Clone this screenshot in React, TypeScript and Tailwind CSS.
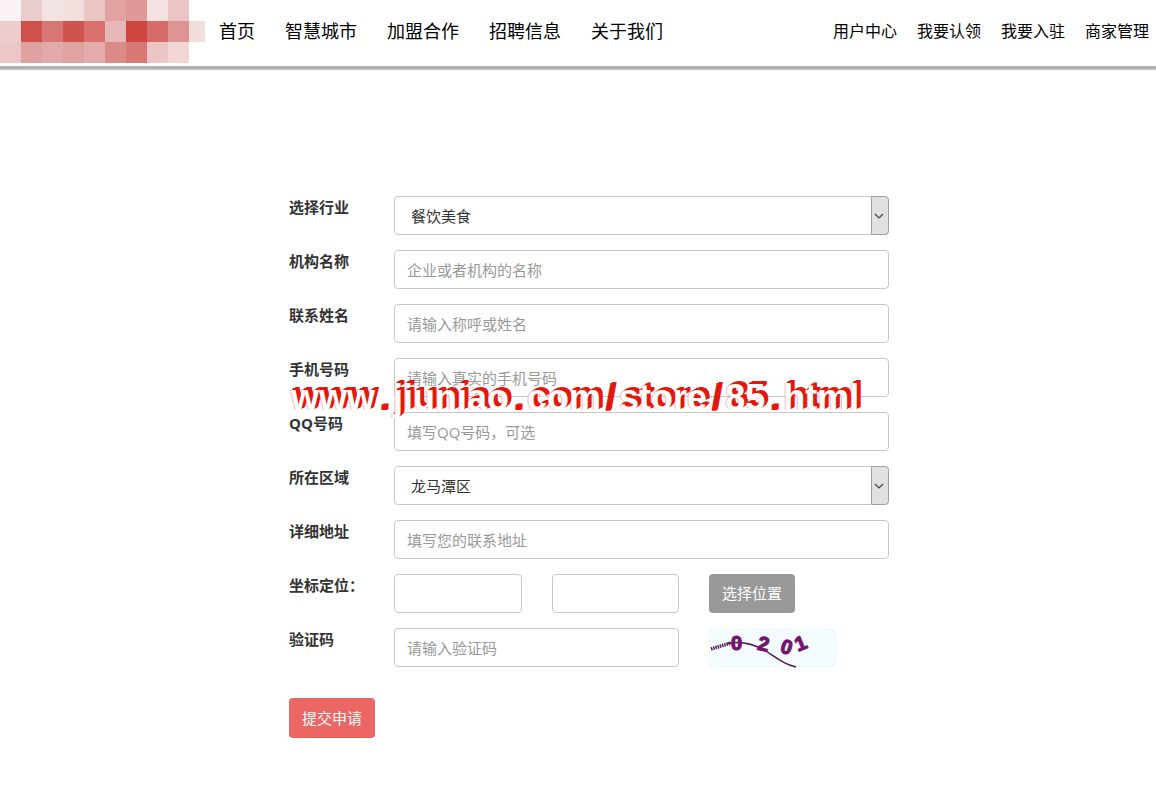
import type { ReactNode } from 'react';

const mainNav = ['首页', '智慧城市', '加盟合作', '招聘信息', '关于我们'];
const userNav = ['用户中心', '我要认领', '我要入驻', '商家管理'];

const LOGO_ROWS = [
    ['#fbf3f3', '#ebcccc', '#f3e2e2', '#f4dfdf', '#ebc5c4', '#e3a3a2', '#df9997', '#f4e2e2', '#e9c6c5'],
    ['#ebcbcb', '#cf514c', '#d87875', '#cd544f', '#da716e', '#e6b8b7', '#cd4740', '#d76d6a', '#de9492', '#f2dddd'],
    ['#ebc8c7', '#dfa2a1', '#e2aaa8', '#dfa3a2', '#e2adab', '#da8a87', '#d87874', '#ebc6c5', '#f1d6d5'],
];

const watermark = ['www', '.', 'jiuniao', '.', 'com', '/', 'store', '/', '85', '.', 'html'];

const inputClass =
    'h-[39px] w-full min-w-0 rounded border border-[#c8c8c8] bg-white px-3 text-[15px] text-[#333] outline-none placeholder:text-[#999] focus:border-[#999]';

function Logo() {
    return (
        <svg className="h-16 w-[205px] shrink-0" viewBox="0 0 205 64" shapeRendering="crispEdges" aria-hidden="true">
            {LOGO_ROWS.map((row, y) =>
                row.map((fill, x) => (
                    <rect key={`${x}-${y}`} x={x * 21} y={y * 21} width={21} height={21} fill={fill} />
                ))
            )}
        </svg>
    );
}

function Row({ id, label, children }: { id: string; label: string; children: ReactNode }) {
    return (
        <div className="flex">
            <label htmlFor={id} className="w-[105px] shrink-0 text-[15px] leading-[22px] font-bold text-[#333]">
                {label}
            </label>
            <div className="min-w-0 flex-1">{children}</div>
        </div>
    );
}

function TextRow({ id, label, placeholder }: { id: string; label: string; placeholder: string }) {
    return (
        <Row id={id} label={label}>
            <input id={id} name={id} type="text" placeholder={placeholder} className={inputClass} />
        </Row>
    );
}

function SelectRow({ id, label, options }: { id: string; label: string; options: string[] }) {
    return (
        <Row id={id} label={label}>
            <div className="relative">
                <select
                    id={id}
                    name={id}
                    className="block h-[39px] w-full appearance-none rounded border border-[#c8c8c8] bg-white px-4 pt-0.5 text-[15px] text-[#333] outline-none"
                >
                    {options.map((option) => (
                        <option key={option}>{option}</option>
                    ))}
                </select>
                <span className="pointer-events-none absolute inset-y-0 right-0 flex w-[18px] items-center justify-center rounded-r border border-[#a0a0a0] bg-[#e1e1e1] pr-0.5">
                    <svg width="10" height="6" viewBox="0 0 10 6" fill="none" stroke="#444" strokeWidth="1.2">
                        <path d="M1 1l4 4 4-4" />
                    </svg>
                </span>
            </div>
        </Row>
    );
}

function Captcha() {
    return (
        <svg className="h-10 w-32" viewBox="0 0 128 40" role="img" aria-label="验证码 0201">
            <rect width="128" height="40" fill="#f3fbff" />
            {/* noise line, hatched where it starts */}
            <path d="M2 21 L22 15" stroke="#5b1b55" strokeWidth="3.5" strokeDasharray="1.5 0.8" fill="none" />
            <path d="M18 15.5 C34 12 48 17 60 25 S76 36 87 39" stroke="#541650" strokeWidth="1.5" fill="none" />
            <g
                fill="#74146c"
                stroke="#74146c"
                strokeWidth="1.2"
                fontFamily="Liberation Sans, sans-serif"
                fontWeight="bold"
                fontSize="20"
            >
                <text x="22" y="22">0</text>
                <text x="49" y="23" transform="rotate(12 55 16)">2</text>
                <text x="72" y="26" transform="rotate(18 78 19)">0</text>
                <text x="86" y="22" transform="rotate(-22 92 15)">1</text>
            </g>
        </svg>
    );
}

function Watermark() {
    return (
        <p className="pointer-events-none absolute top-[184px] left-6 flex gap-1 font-['Liberation_Sans',sans-serif] text-4xl leading-9 font-bold whitespace-nowrap">
            {watermark.map((part, i) => (
                <span
                    key={i}
                    className={
                        part === '.' || part === '/'
                            ? 'text-[#e3170d] [text-shadow:1px_0_0_#e3170d,2px_-1px_0_#e3170d]'
                            : 'text-white [text-shadow:1px_-1px_0_#e3170d,2px_-2px_0_#e3170d,3px_-2px_0_#e3170d,4px_-3px_0_#e3170d,-1px_0_0_#f3b9b6]'
                    }
                >
                    {part}
                </span>
            ))}
        </p>
    );
}

export default function App() {
    return (
        <div className="min-h-screen bg-white font-['Open_Sans','Noto_Sans_CJK_SC',sans-serif]">
            <header className="flex h-[69px] items-start border-b-[3px] border-[#b2b2b2] shadow-[0_1px_1px_#ccc]">
                <Logo />
                <nav className="ml-3.5 flex h-[62px] shrink-0 items-center gap-[30px] text-lg text-black">
                    {mainNav.map((item) => (
                        <a key={item} href="#">{item}</a>
                    ))}
                </nav>
                <nav className="mr-[7px] ml-auto flex h-[62px] shrink-0 items-center gap-5 text-base text-black">
                    {userNav.map((item) => (
                        <a key={item} href="#">{item}</a>
                    ))}
                </nav>
            </header>

            <main className="relative mx-auto mt-[127px] max-w-[622px] pl-[22px]">
                <form onSubmit={(e) => e.preventDefault()}>
                    <div className="flex flex-col gap-[15px]">
                        <SelectRow id="industry" label="选择行业" options={['餐饮美食']} />
                        <TextRow id="company" label="机构名称" placeholder="企业或者机构的名称" />
                        <TextRow id="contact" label="联系姓名" placeholder="请输入称呼或姓名" />
                        <TextRow id="mobile" label="手机号码" placeholder="请输入真实的手机号码" />
                        <TextRow id="qq" label="QQ号码" placeholder="填写QQ号码，可选" />
                        <SelectRow id="area" label="所在区域" options={['龙马潭区']} />
                        <TextRow id="address" label="详细地址" placeholder="填写您的联系地址" />
                        <Row id="lng" label="坐标定位：">
                            <div className="grid grid-cols-[128px_127px_1fr] gap-x-[30px]">
                                <input id="lng" name="lng" type="text" className={inputClass} />
                                <input id="lat" name="lat" type="text" aria-label="纬度" className={inputClass} />
                                <button type="button" className="h-[39px] w-[86px] rounded bg-[#999] text-[15px] text-white">
                                    选择位置
                                </button>
                            </div>
                        </Row>
                        <Row id="captcha" label="验证码">
                            <div className="grid grid-cols-[128px_127px_1fr] gap-x-[30px]">
                                <div className="col-span-2">
                                    <input id="captcha" name="captcha" type="text" placeholder="请输入验证码" className={inputClass} />
                                </div>
                                <Captcha />
                            </div>
                        </Row>
                    </div>
                    <button type="submit" className="mt-[30px] h-10 w-[86px] rounded bg-[#ec6764] text-[15px] text-white">
                        提交申请
                    </button>
                </form>
                <Watermark />
            </main>
        </div>
    );
}
